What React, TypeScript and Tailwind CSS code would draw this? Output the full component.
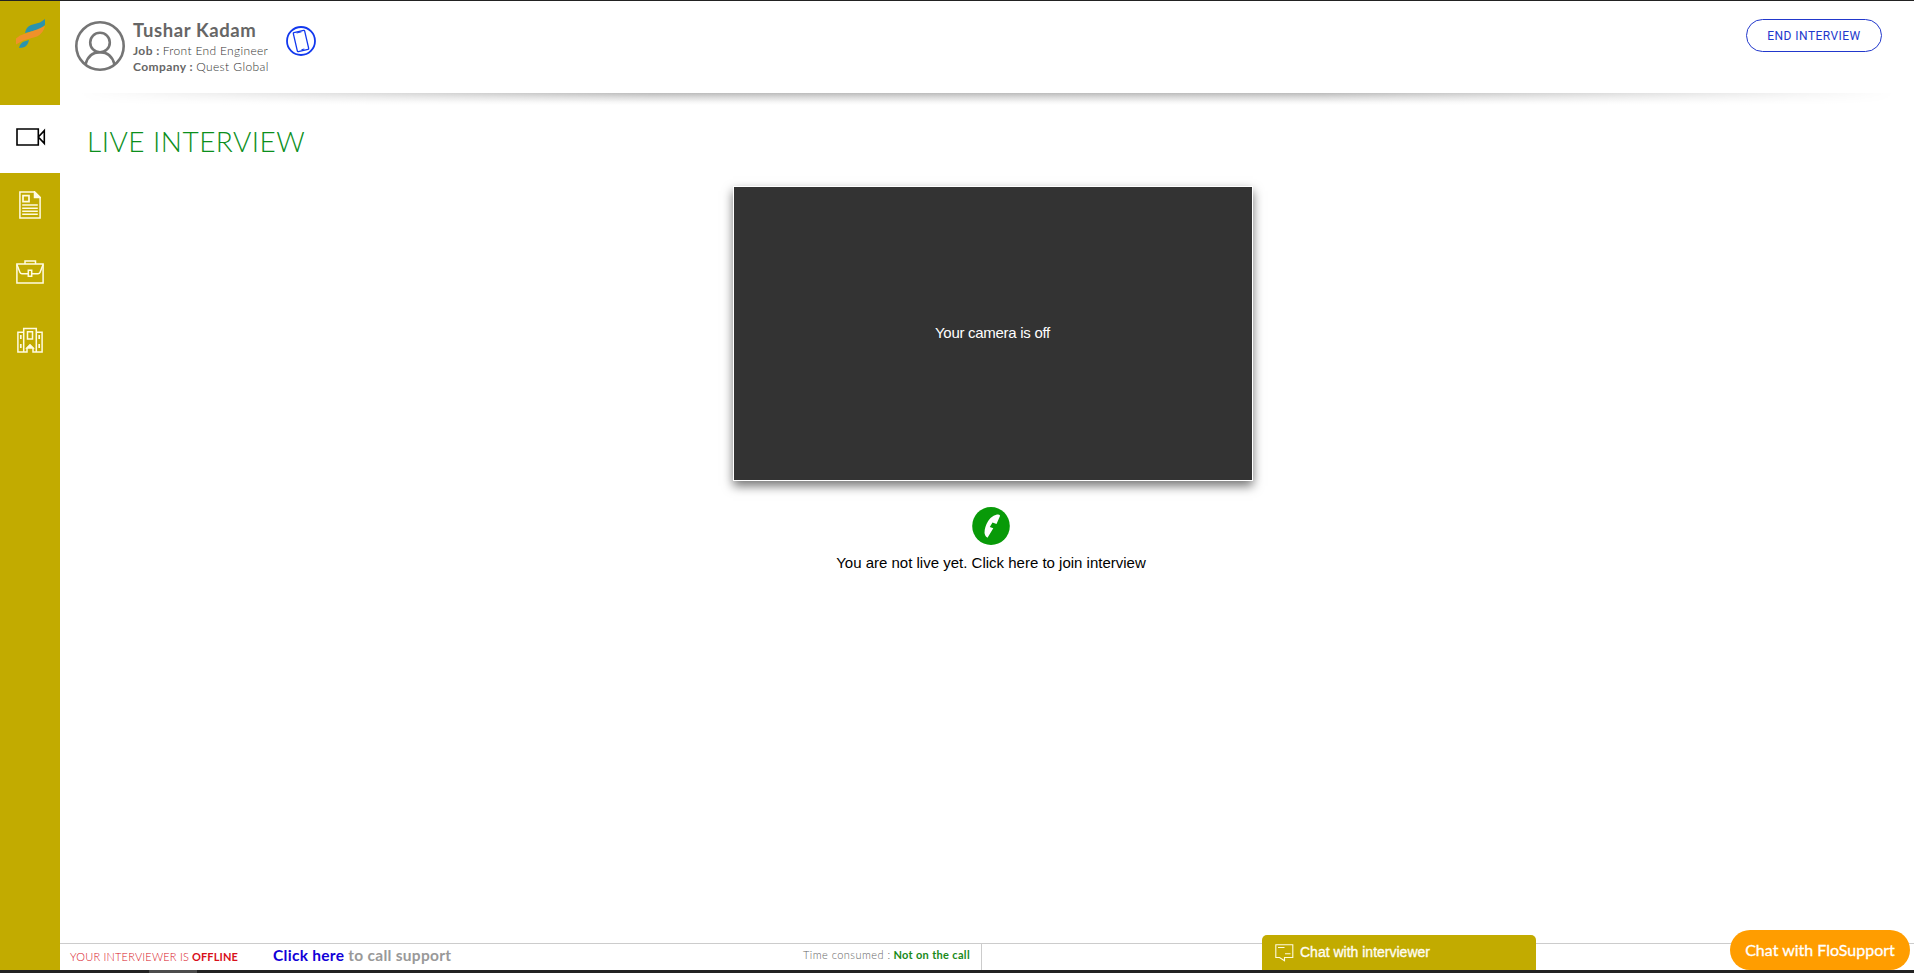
import type { ReactNode } from 'react';

function NavItem({ active, children }: { active?: boolean; children: ReactNode }) {
  return (
    <a className={`flex w-[60px] items-center justify-center pb-1 ${active ? 'h-[68px] bg-white text-black' : 'h-[67.5px] text-[#fffbe0]'}`}>
      {children}
    </a>
  );
}

function Logo() {
  return (
    <svg className="ml-4 mt-[18px]" width="30" height="32" viewBox="0 0 30 32">
      <path d="M29 0V6L23 10.5L9 14Q10 8 15 6L24 3.5Z" fill="#2b93ad" />
      <path d="M29 7Q27.5 14 21 17.5L7 21.5L0 25.5V19.5L4 16.5L21 10.5Z" fill="#f0912a" />
      <path d="M3 29Q4 24 8 22.5L13 21Q11.5 28 7 28.5Z" fill="#2b93ad" />
    </svg>
  );
}

function VideoIcon() {
  return (
    <svg width="30" height="18" viewBox="0 0 30 18" fill="none" stroke="currentColor" strokeWidth="1.6" className="ml-px">
      <path d="M1 1H22.3V17H1Z M22.3 9L28.3 2.6V15.4Z" />
    </svg>
  );
}

function ResumeIcon() {
  return (
    <svg width="22" height="28" viewBox="0 0 22 28" fill="none" stroke="currentColor" strokeWidth="1.5">
      <path d="M.9 .9H15.5L21.1 6.5V27.1H.9Z" />
      <path d="M15.5 .9V6.5H21.1Z" fill="currentColor" />
      <path d="M4 4.6H10V10.6H4Z" strokeWidth="1.7" />
      <path d="M3.2 14H18.8M3.2 17.2H18.8M3.2 20.2H18.8M3.2 23.2H18.8" />
    </svg>
  );
}

function BriefcaseIcon() {
  return (
    <svg width="28" height="24" viewBox="0 0 28 24" fill="none" stroke="currentColor" strokeWidth="1.5">
      <path d="M.9 4H27.1V23.1H.9Z M9 4V.9H19.5V4" />
      <path d="M.9 4.5L4 12.5Q4.5 13.8 6 13.8H12.3M15.7 13.8H22Q23.5 13.8 24 12.5L27.1 4.5M12.3 10.3H15.7V16.2H12.3Z" />
    </svg>
  );
}

function BuildingIcon() {
  return (
    <svg width="26" height="26" viewBox="0 0 26 26" fill="none" stroke="currentColor" strokeWidth="1.5">
      <path d="M6.7 25V1.5H19.3V25 M6.7 5.2H.9V25H10V21L13 18L16 21V25H25.1V5.2H19.3" />
      <path d="M10.5 4.8H15.5V12H10.5Z" />
      <path d="M3.8 8V12M3.8 17V21M22.2 8V12M22.2 17V21" strokeWidth="1.7" />
      <path d="M10 21L13 18L16 21Z" fill="currentColor" />
    </svg>
  );
}

function Avatar() {
  return (
    <svg width="50" height="50" viewBox="0 0 50 50" fill="none" stroke="#757575" strokeWidth="2.6">
      <circle cx="25" cy="25" r="23.7" />
      <circle cx="25" cy="21.5" r="9.8" />
      <path d="M10.5 43.5C12.5 35.5 18 31.3 25 31.3S37.5 35.5 39.5 43.5" />
    </svg>
  );
}

function PhoneBadge() {
  return (
    <svg width="30" height="30" viewBox="0 0 30 30" fill="none" stroke="#1238ee" strokeWidth="1.3">
      <circle cx="15" cy="15" r="14" strokeWidth="1.8" />
      <g transform="rotate(-13 15 15)">
        <rect x="9.2" y="5.2" width="11.6" height="19.6" rx=".8" />
        <path d="M12.5 6.2H17.5M13.5 23.6H16.5" strokeWidth="1" />
      </g>
    </svg>
  );
}

function CallIcon() {
  return (
    <svg width="38" height="38" viewBox="0 0 38 38">
      <ellipse cx="19" cy="19" rx="18.8" ry="19" fill="#089a08" />
      <path d="M25 7.5Q28.5 7 28 9L24.5 17L20.5 15.5L17.8 20L21.3 21.3L15.5 30.8Q11.8 28.5 12.7 23Q14 16 18.5 11Q21.5 8 25 7.5Z" fill="#fff" />
    </svg>
  );
}

function ChatIcon() {
  return (
    <svg width="19" height="18" viewBox="0 0 19 18" fill="none" stroke="#fffbe0" strokeWidth="1.1">
      <path d="M.8 .8H17.8V13.5H9.5V16.8L4.5 13.5H.8Z M3 3.5H9.5M10 9.8H15.5" />
    </svg>
  );
}

export default function App() {
  return (
    <div className="flex h-[973px] w-[1914px] flex-col overflow-hidden border-t border-[#222] bg-white font-['Lato',sans-serif]">
      <div className="flex h-[969px]">
        <nav className="flex w-[60px] shrink-0 flex-col bg-[#c2ab00]">
          <div className="h-[104px]"><Logo /></div>
          <NavItem active><VideoIcon /></NavItem>
          <NavItem><ResumeIcon /></NavItem>
          <NavItem><BriefcaseIcon /></NavItem>
          <NavItem><BuildingIcon /></NavItem>
        </nav>

        <div className="flex flex-1 flex-col">
          <header className="flex h-[92px] items-start">
            <div className="ml-[15px] mt-5"><Avatar /></div>
            <div className="ml-2 mt-[17px] whitespace-nowrap text-[#666]">
              <h2 className="mb-px text-[18.5px] font-bold leading-6 tracking-[0.6px]">Tushar Kadam</h2>
              <p className="text-[12px] leading-4"><b className="tracking-[0.4px]">Job :</b> <span className="font-light tracking-[0.33px] text-[#333]">Front End Engineer</span></p>
              <p className="text-[12px] leading-4"><b className="tracking-[0.42px]">Company :</b> <span className="font-light tracking-[0.4px] text-[#333]">Quest Global</span></p>
            </div>
            <div className="ml-[17px] mt-[25px]"><PhoneBadge /></div>
            <button className="ml-auto mr-8 mt-[18px] h-[33px] w-[136px] whitespace-nowrap rounded-full border border-[#2238cc] font-['Roboto',sans-serif] text-[12px] tracking-[0.45px] text-[#2238cc]">END INTERVIEW</button>
          </header>
          <div className="h-3 shrink-0 bg-[linear-gradient(to_bottom,#bcbcbc,#dedede_40%,#f6f6f6_75%,#ffffff)] [mask-image:linear-gradient(to_right,transparent_1%,black_32%,black_68%,transparent_99%)]" />

          <main className="flex flex-1 flex-col">
            <h1 className="ml-[27px] mt-[19px] h-[34px] whitespace-nowrap text-[28px] font-light leading-[34px] tracking-[0.48px] text-[#0b8f1c]">LIVE INTERVIEW</h1>
            <section className="ml-[673px] mt-[28px] flex h-[295px] w-[520px] items-center justify-center border border-white bg-[#333] font-['Liberation_Sans',sans-serif] text-[15px] text-white shadow-[0_5px_10px_rgba(0,0,0,0.55)]">
              <span className="whitespace-nowrap pr-px tracking-[-0.28px]">Your camera is off</span>
            </section>
            <section className="ml-[673px] mt-[26px] flex w-[516px] flex-col items-center font-['Liberation_Sans',sans-serif] text-[15px] text-black">
              <CallIcon />
              <p className="mt-[9px] whitespace-nowrap leading-[18px]">You are not live yet. Click here to join interview</p>
            </section>
          </main>

          <footer className="relative flex h-[27px] shrink-0 border-t border-[#ccc]">
            <div className="flex w-[922px] items-start whitespace-nowrap border-r border-[#ccc]">
              <p className="ml-[10px] mt-[5px] w-[203px] text-[11px] leading-4 text-[#d80f1a]"><span className="font-light tracking-[0.19px]">YOUR INTERVIEWER IS</span> <b className="tracking-[0.15px]">OFFLINE</b></p>
              <p className="mt-px text-[15.5px] font-bold leading-5 tracking-[0.28px] text-[#999]"><span className="text-[#1200d8]">Click here</span> to call support</p>
              <p className="ml-auto mr-[11px] mt-[3px] text-[11px] leading-4 text-[#666]"><span className="font-light tracking-[0.46px]">Time consumed :</span> <b className="tracking-[0.33px] text-[#198a19]">Not on the call</b></p>
            </div>
            <div className="absolute -top-[9px] left-[1202px] flex h-[35px] w-[274px] items-start rounded-t-[5px] bg-[#c2ab00] pl-[13px] font-['Liberation_Sans',sans-serif] text-[14px] text-[#fffdf0]">
              <div className="mt-[9px]"><ChatIcon /></div>
              <span className="ml-[6px] mt-[8px] whitespace-nowrap leading-[18px] [-webkit-text-stroke:0.35px_#fffdf0]">Chat with interviewer</span>
            </div>
            <button className="absolute -top-[14px] left-[1670px] h-10 w-[180px] whitespace-nowrap rounded-full bg-[#ff9d00] text-[16px] text-white [-webkit-text-stroke:0.3px_white]">Chat with FloSupport</button>
          </footer>
        </div>
      </div>
      <div className="h-[3px] bg-[#222]"><div className="ml-[149px] h-full w-12 bg-[#4c4c4c]" /></div>
    </div>
  );
}
